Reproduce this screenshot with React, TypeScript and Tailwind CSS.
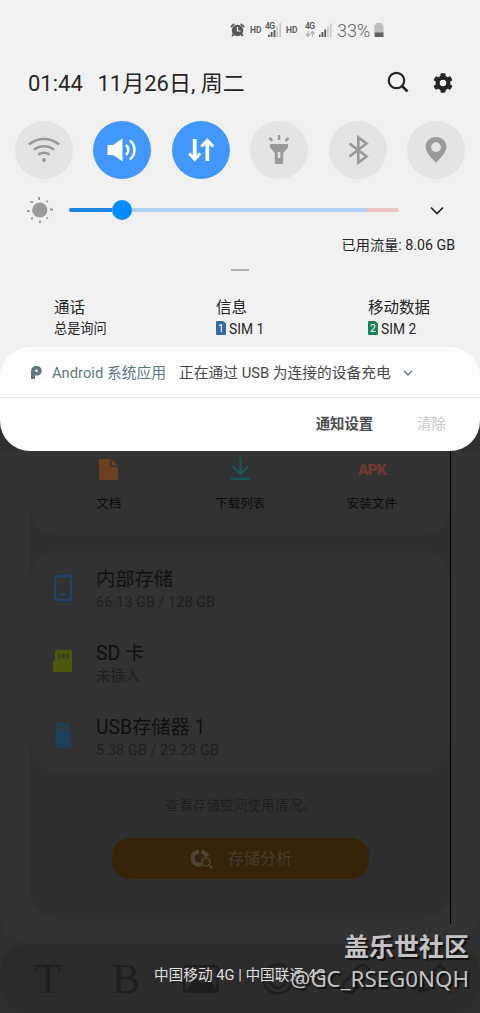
import type { ReactNode } from "react";

const toggles = [
  { id: "wifi", on: false },
  { id: "sound", on: true },
  { id: "data", on: true },
  { id: "torch", on: false },
  { id: "bluetooth", on: false },
  { id: "location", on: false },
];

function ToggleIcon({ id }: { id: string }) {
  switch (id) {
    case "wifi":
      return (
        <svg width="32" height="32" viewBox="0 0 32 32" fill="none" stroke="currentColor" strokeWidth="2.4">
          <path d="M1 10.500a23 23 0 0 1 30 0" />
          <path d="M6 15.700a16 16 0 0 1 20 0" />
          <path d="M10.300 20.800a9 9 0 0 1 11.400 0" />
          <circle cx="16" cy="26" r="2" fill="currentColor" stroke="none" />
        </svg>
      );
    case "sound":
      return (
        <svg width="32" height="32" viewBox="0 0 32 32" fill="none" stroke="currentColor" strokeWidth="2.500">
          <path d="M1.500 11H7l9.500-6.500v23L7 21H1.500z" fill="currentColor" stroke="none" />
          <path d="M20 11a6.500 6.500 0 0 1 0 10" />
          <path d="M23.800 6.500c6.200 4.500 6.200 14.500 0 19" />
        </svg>
      );
    case "data":
      return (
        <svg width="32" height="32" viewBox="0 0 32 32" fill="none" stroke="currentColor" strokeWidth="3.800">
          <path d="M9.700 5v20.500" />
          <path d="M4.200 19.500l5.500 5.600 5.500-5.600" strokeWidth="3.200" />
          <path d="M22.300 27V6.500" />
          <path d="M16.500 12.500l5.800-6 5.800 6" strokeWidth="3.200" />
        </svg>
      );
    case "torch":
      return (
        <svg width="32" height="32" viewBox="0 0 32 32" fill="currentColor">
          <path d="M7 10h18v3.500l-4.800 5.500v9.500q0 1.500-1.500 1.500h-5.400q-1.500 0-1.500-1.500V19L7 13.500zM14.700 18v6h2.600v-6z" fillRule="evenodd" />
          <path d="M14.900 1h2.400v5h-2.400zM5.500 4.500l2-1.500 2.800 3-2 1.500zM26.500 4.500l-2-1.200-3 2.900 2 1.500z" />
        </svg>
      );
    case "bluetooth":
      return (
        <svg width="32" height="32" viewBox="0 0 32 32" fill="none" stroke="currentColor" strokeWidth="2.700">
          <path d="M7.500 9.500l17 13-8.200 6V3.500l8.200 6-17 13" />
        </svg>
      );
    default:
      return (
        <svg width="32" height="32" viewBox="0 0 32 32" fill="currentColor">
          <path fillRule="evenodd" d="M16 3C10 3 5.600 7.400 5.600 13c0 6 6.400 11 10.400 15.800C20 24 26.400 19 26.400 13 26.400 7.400 22 3 16 3zm0 5.300a4.900 4.900 0 1 1 0 9.800 4.900 4.900 0 0 1 0-9.800z" />
        </svg>
      );
  }
}

function StatusBar() {
  return (
    <div className="flex h-[60px] items-center pl-[230px] text-[#606060]">
      <svg width="15" height="16" viewBox="0 0 15 16" fill="#585858">
        <circle cx="7.500" cy="8.500" r="5.700" />
        <path d="M3.500 12l-1.300 2.200M11.500 12l1.300 2.200" stroke="#585858" strokeWidth="1.800" />
        <path d="M.8 5L4.300 1.800M14.200 5l-3.500-3.200" stroke="#585858" strokeWidth="1.700" />
        <path d="M7.500 5v4h3" fill="none" stroke="#f2f2f2" strokeWidth="1.200" />
      </svg>
      <span className="ml-[5px] w-[12px] text-[8.500px] leading-4 font-bold">HD</span>
      <svg className="ml-[3px]" width="17" height="16" viewBox="0 0 17 16">
        <path d="M11.500 4h1.500v11h-1.500zM14.400 1h1.500v14h-1.500z" fill="#c4c4c4" />
        <path d="M3 12.500h1.700V15H3zM5.700 10h1.800v5H5.700zM8.600 8h1.800v7H8.600z" fill="#585858" />
        <text x="0" y="7" fontSize="8.500" fontWeight="600" fill="#585858" textLength="10">4G</text>
      </svg>
      <span className="ml-[4px] w-[12px] text-[8.500px] leading-4 font-bold">HD</span>
      <svg className="ml-[7px]" width="28" height="16" viewBox="0 0 28 16">
        <text x="0" y="7" fontSize="8.500" fontWeight="600" fill="#585858" textLength="10">4G</text>
        <path d="M3 9v5M1 12l2 2.300L5 12M7.500 14.500v-5M5.500 12l2-2.300 2 2.300" stroke="#b0b0b0" strokeWidth="1.200" fill="none" />
        <path d="M14 12.500h1.500V15H14zM16.500 10h1.800v5h-1.800zM19.300 7.500h1.800V15h-1.800z" fill="#585858" />
        <path d="M22.200 4.500h1.500V15h-1.500zM25 1.500h1.500V15H25z" fill="#c4c4c4" />
      </svg>
      <span className="ml-[4px] w-[34px] pt-[2px] text-[18px] leading-5 font-light">33%</span>
      <svg className="ml-[3px]" width="10" height="16" viewBox="0 0 10 16">
        <path d="M2.500 1h5v1.500H9.500V11h-9V2.500h2z" fill="#bcbcbc" />
        <path d="M.5 10.500h9V15h-9z" fill="#606060" />
      </svg>
    </div>
  );
}

function SimCard({ n, color }: { n: string; color: string }) {
  return (
    <svg className="mr-[3px] -mt-[2px]" width="10" height="14" viewBox="0 0 10 14">
      <path d="M1 0h6l3 2.500V13q0 1-1 1H1q-1 0-1-1V1q0-1 1-1z" fill={color} />
      <text x="5" y="10.800" fontSize="10.500" textAnchor="middle" fill="#fff">{n}</text>
    </svg>
  );
}

function SimColumn({ title, className, children }: { title: string; className: string; children: ReactNode }) {
  return (
    <div className={className}>
      <div className="text-[15.500px] leading-[22px]">{title}</div>
      <div className="flex h-[20px] items-center text-[13.200px] leading-5">{children}</div>
    </div>
  );
}

function QuickPanel() {
  return (
    <div className="h-[390px] bg-[#f1f1f1] text-[#252525]">
      <StatusBar />
      <div className="flex h-[46px] items-center pl-[28px] text-[22px] leading-[30px]">
        <span className="w-[69.500px] pt-[2px]">01:44</span>
        <span className="pt-[2px]">11月26日, 周二</span>
        <svg className="ml-auto -mt-[2px]" width="22" height="22" viewBox="0 0 22 22" fill="none" stroke="#252525">
          <circle cx="9.500" cy="9.500" r="7.700" strokeWidth="2.200" />
          <path d="M15 15l5.500 5.500" strokeWidth="2.700" />
        </svg>
        <svg className="-mt-[1px] mr-[27px] ml-[24px]" width="20" height="20" viewBox="0 0 20 20">
          <circle cx="10" cy="10" r="5.500" fill="none" stroke="#252525" strokeWidth="3.900" />
          <g fill="#252525">
            <rect x="7.500" y="0.200" width="5" height="19.600" rx="1.200" mask="url(#hub)" />
            <rect x="7.500" y="0.200" width="5" height="19.600" rx="1.200" transform="rotate(60 10 10)" mask="url(#hub)" />
            <rect x="7.500" y="0.200" width="5" height="19.600" rx="1.200" transform="rotate(120 10 10)" mask="url(#hub)" />
          </g>
          <mask id="hub">
            <rect width="20" height="20" fill="#fff" />
            <circle cx="10" cy="10" r="3.600" fill="#000" />
          </mask>
        </svg>
      </div>
      <div className="flex justify-between px-[15px] pt-[15px]">
        {toggles.map((t) => (
          <div
            key={t.id}
            className={
              t.on
                ? "flex size-[58px] items-center justify-center rounded-full bg-[#4297ff] text-white"
                : "flex size-[58px] items-center justify-center rounded-full bg-[#e4e4e4] text-[#999]"
            }
          >
            <ToggleIcon id={t.id} />
          </div>
        ))}
      </div>
      <div className="flex h-[62px] items-center pl-[26px]">
        <svg width="28" height="28" viewBox="0 0 28 28" stroke="#999" strokeWidth="1.900">
          <circle cx="13.800" cy="14" r="7.600" fill="#999" stroke="none" />
          <path d="M13 1v3M14 24.500V27M1 15h2.500M24 13.500h3M4.500 6h2.500M20.500 6l1.500-1M5 22.500h2M20.500 21.500l1.500 1" />
        </svg>
        <div className="ml-[15px] flex h-[20px] w-[330px] items-center">
          <div className="h-1 w-[43px] rounded-l-full bg-[#1b84df]" />
          <div className="size-[20px] rounded-full bg-[#008cff]" />
          <div className="h-1 flex-1 bg-[#b0d1ef]" />
          <div className="h-1 w-[32px] rounded-r-full bg-[#eec3c3]" />
        </div>
        <svg className="ml-[31px]" width="14" height="9" viewBox="0 0 14 9" fill="none" stroke="#252525" strokeWidth="1.700">
          <path d="M1 1.500l6 6 6-6" />
        </svg>
      </div>
      <div className="-mt-[6px] pr-[25px] text-right text-[14.200px] leading-5">已用流量: 8.06 GB</div>
      <div className="mx-auto mt-[14px] h-[2px] w-[18px] bg-[#b0b0b0]" />
      <div className="flex pt-[26px] pl-[54px]">
        <SimColumn title="通话" className="w-[162px]">总是询问</SimColumn>
        <SimColumn title="信息" className="w-[152px]">
          <SimCard n="1" color="#356a9f" />
          <span className="text-[13.800px]">SIM 1</span>
        </SimColumn>
        <SimColumn title="移动数据" className="w-[100px]">
          <SimCard n="2" color="#1c805c" />
          <span className="text-[13.800px]">SIM 2</span>
        </SimColumn>
      </div>
    </div>
  );
}

function Notification() {
  return (
    <div className="relative -mt-[43px] h-[104px] rounded-[30px] bg-[#fdfdfd]">
      <div className="flex h-[51px] items-center border-b border-[#e6e6e6] pt-[2px] pl-[31px] text-[14.750px] leading-[22px]">
        <svg className="-mt-px" width="11" height="13" viewBox="0 0 11 13">
          <path d="M0 13V5a5 5 0 0 1 5-5h1a4.800 4.800 0 0 1 0 9.600H4V13z" fill="#5d7883" />
          <circle cx="5.500" cy="4.800" r="1.300" fill="#fdfdfd" />
        </svg>
        <span className="ml-[10px] w-[127px] text-[#5d7883]">Android 系统应用</span>
        <span className="text-[#484848]">正在通过 USB 为连接的设备充电</span>
        <svg className="mt-px ml-[12px]" width="10" height="7" viewBox="0 0 10 7" fill="none" stroke="#5d7883" strokeWidth="1.400">
          <path d="M1 1l4 4 4-4" />
        </svg>
      </div>
      <div className="flex h-[52px] items-center justify-end pt-[2px] pr-[34px] text-[14.400px] leading-5">
        <span className="mr-[44px] font-bold text-[#4c4c4c]">通知设置</span>
        <span className="text-[#c8c8c8]">清除</span>
      </div>
    </div>
  );
}

function Volume({ title, detail, icon }: { title: string; detail: string; icon: ReactNode }) {
  return (
    <div className="flex h-[74px] pl-[22px]">
      <div className="flex w-[44px] items-center">{icon}</div>
      <div className="pt-[15px]">
        <div className="text-[19.300px] leading-[27px] text-[#101010]">{title}</div>
        <div className="text-[14.500px] leading-[20px] text-[#1f1f1f]">{detail}</div>
      </div>
    </div>
  );
}

function FileManager() {
  return (
    <div className="h-[493px] rounded-b-[30px] bg-[#333] pl-[30px]">
      <div className="flex w-[421px]">
        <div className="h-[468px] w-[420px] rounded-b-[28px] bg-[#2f2f2f]">
          <div className="flex h-[84px] rounded-b-[28px] bg-[#323232] pl-[13px] text-[12.500px] text-[#0c0c0c]">
            <div className="flex w-[131.500px] flex-col items-center">
              <svg className="mt-[8px]" width="19" height="21" viewBox="0 0 19 21" fill="#6c4122">
                <path d="M1 0h10v8h8v12q0 1-1 1H1q-1 0-1-1V1q0-1 1-1zM12.500 0l6.500 6.500h-6.500z" />
              </svg>
              <span className="mt-[14px] leading-5">文档</span>
            </div>
            <div className="flex w-[131.500px] flex-col items-center">
              <svg className="mt-[6px]" width="19" height="23" viewBox="0 0 19 23" fill="none" stroke="#1a5551" strokeWidth="2.400">
                <path d="M9.500 0v17M1.500 9l8 8 8-8M0 21.700h19" />
              </svg>
              <span className="mt-[14px] leading-5">下载列表</span>
            </div>
            <div className="flex w-[131.500px] flex-col items-center">
              <span className="mt-[9px] text-[15.500px] leading-[20px] font-black tracking-[-0.8px] text-[#73382d]">APK</span>
              <span className="mt-[14px] leading-5">安装文件</span>
            </div>
          </div>
          <div className="mt-[16px] h-[221px] rounded-[28px] bg-[#323232]">
            <Volume
              title="内部存储"
              detail="66.13 GB / 128 GB"
              icon={
                <svg className="ml-[2px]" width="18" height="26" viewBox="0 0 18 26" fill="none" stroke="#1f4468" strokeWidth="2.200">
                  <rect x="1.100" y="1.100" width="15.800" height="23.800" rx="2" />
                  <path d="M6 19.500h6" />
                </svg>
              }
            />
            <Volume
              title="SD 卡"
              detail="未插入"
              icon={
                <svg className="-mt-[2px] ml-[1px]" width="19" height="22" viewBox="0 0 19 22">
                  <path d="M3.500 0H18q1 0 1 1v20q0 1-1 1H1q-1 0-1-1v-9l2-2V1.500Q2 0 3.500 0z" fill="#4d550f" />
                  <path d="M6.500 3.500v5M10.500 3.500v5M14.500 3.500v5" stroke="#33391c" strokeWidth="2" />
                </svg>
              }
            />
            <Volume
              title="USB存储器 1"
              detail="5.38 GB / 29.23 GB"
              icon={
                <svg className="-mt-px ml-[3px]" width="16" height="25" viewBox="0 0 16 25">
                  <path d="M2.500 0h11q1 0 1 1v7q1.500 0 1.500 1.500V24q0 1-1 1H1q-1 0-1-1V9.500Q0 8 1.500 8V1q0-1 1-1z" fill="#1d4058" />
                  <path d="M4 2.500h8v5H4z" fill="#373737" />
                  <path d="M5.500 4h1.500v2H5.500zM9 4h1.500v2H9z" fill="#1d4058" />
                </svg>
              }
            />
          </div>
          <div className="mt-[23px] text-center text-[13.700px] leading-[20px] text-[#1f1f1f]">
            <span className="ml-[1px]">查看存储空间使用情况。</span>
          </div>
          <div className="mt-[23px] ml-[82px] flex h-[41px] w-[257px] items-center rounded-[18px] bg-[#36240a] pl-[79px] text-[#453e30]">
            <svg width="22" height="20" viewBox="0 0 22 20" fill="none" stroke="#4b4437">
              <path d="M8 2.700a6.500 6.500 0 0 0 0 13" strokeWidth="4.400" />
              <path d="M8 15.700h2.500" strokeWidth="4.400" />
              <path d="M10.500 2.700a7 7 0 0 1 5.500 5" strokeWidth="4.400" />
              <circle cx="15" cy="13" r="4" strokeWidth="1.600" fill="#36240a" />
              <path d="M18 16l3.500 3.500" strokeWidth="1.800" />
            </svg>
            <span className="ml-[15px] pt-px text-[16px] leading-6">存储分析</span>
          </div>
        </div>
        <div className="h-[473px] w-px bg-black" />
      </div>
    </div>
  );
}

function EditorBar() {
  return (
    <div className="flex h-[69px] items-center rounded-[30px] bg-[#2c2c2c] pl-[35px] text-[#1e1e1e]">
      <span className="w-[77px] font-['Liberation_Serif',serif] text-[42px] leading-[44px]">T</span>
      <span className="w-[71px] font-['Liberation_Serif',serif] text-[42px] leading-[44px]">B</span>
      <svg width="36" height="28" viewBox="0 0 36 28" fill="none" stroke="#1e1e1e" strokeWidth="2.500">
        <rect x="1.200" y="1.200" width="33.600" height="25.600" rx="3" />
        <path d="M2 26l11-13 6 6 6-7 9 14z" fill="#1e1e1e" stroke="none" />
      </svg>
      <svg className="ml-[43px]" width="32" height="32" viewBox="0 0 32 32" fill="none" stroke="#1e1e1e" strokeWidth="2.500">
        <circle cx="16" cy="16" r="14.500" />
        <path d="M8 17a8 8 0 0 0 16 0" />
        <path d="M11 10v3M21 10v3" />
      </svg>
      <svg className="ml-[46px]" width="32" height="32" viewBox="0 0 32 32" fill="none" stroke="#1e1e1e" strokeWidth="2.500">
        <path d="M13 9l5-5a6.300 6.300 0 0 1 9 9l-6 6a6.300 6.300 0 0 1-9 0" />
        <path d="M19 23l-5 5a6.300 6.300 0 0 1-9-9l6-6a6.300 6.300 0 0 1 9 0" />
      </svg>
      <svg className="ml-[44px]" width="32" height="32" viewBox="0 0 32 32" fill="none" stroke="#1e1e1e" strokeWidth="2.500">
        <path d="M3 29l3-9L24 2l6 6-18 18-9 3" />
      </svg>
    </div>
  );
}

export default function App() {
  return (
    <div className="relative h-[1013px] w-[480px] overflow-hidden bg-[#303030] font-[Roboto,'Noto_Sans_CJK_SC',sans-serif]">
      <QuickPanel />
      {/* the last strip of the panel sits behind the card's rounded top */}
      <Notification />
      <FileManager />
      <EditorBar />
      <div className="absolute top-[965px] left-0 w-full text-center text-[14.700px] leading-5 whitespace-nowrap text-[#dedede]">
        中国移动 4G | 中国联通 4G
      </div>
      <div className="absolute top-[931px] right-[11px] text-right whitespace-nowrap text-[#c3c3c3] [text-shadow:2px_2px_1px_#111]">
        <div className="text-[25px] leading-[33px] font-bold">盖乐世社区</div>
        <div className="font-['Noto_Sans',sans-serif] text-[22.300px] leading-[30px]">@GC_RSEG0NQH</div>
      </div>
    </div>
  );
}
